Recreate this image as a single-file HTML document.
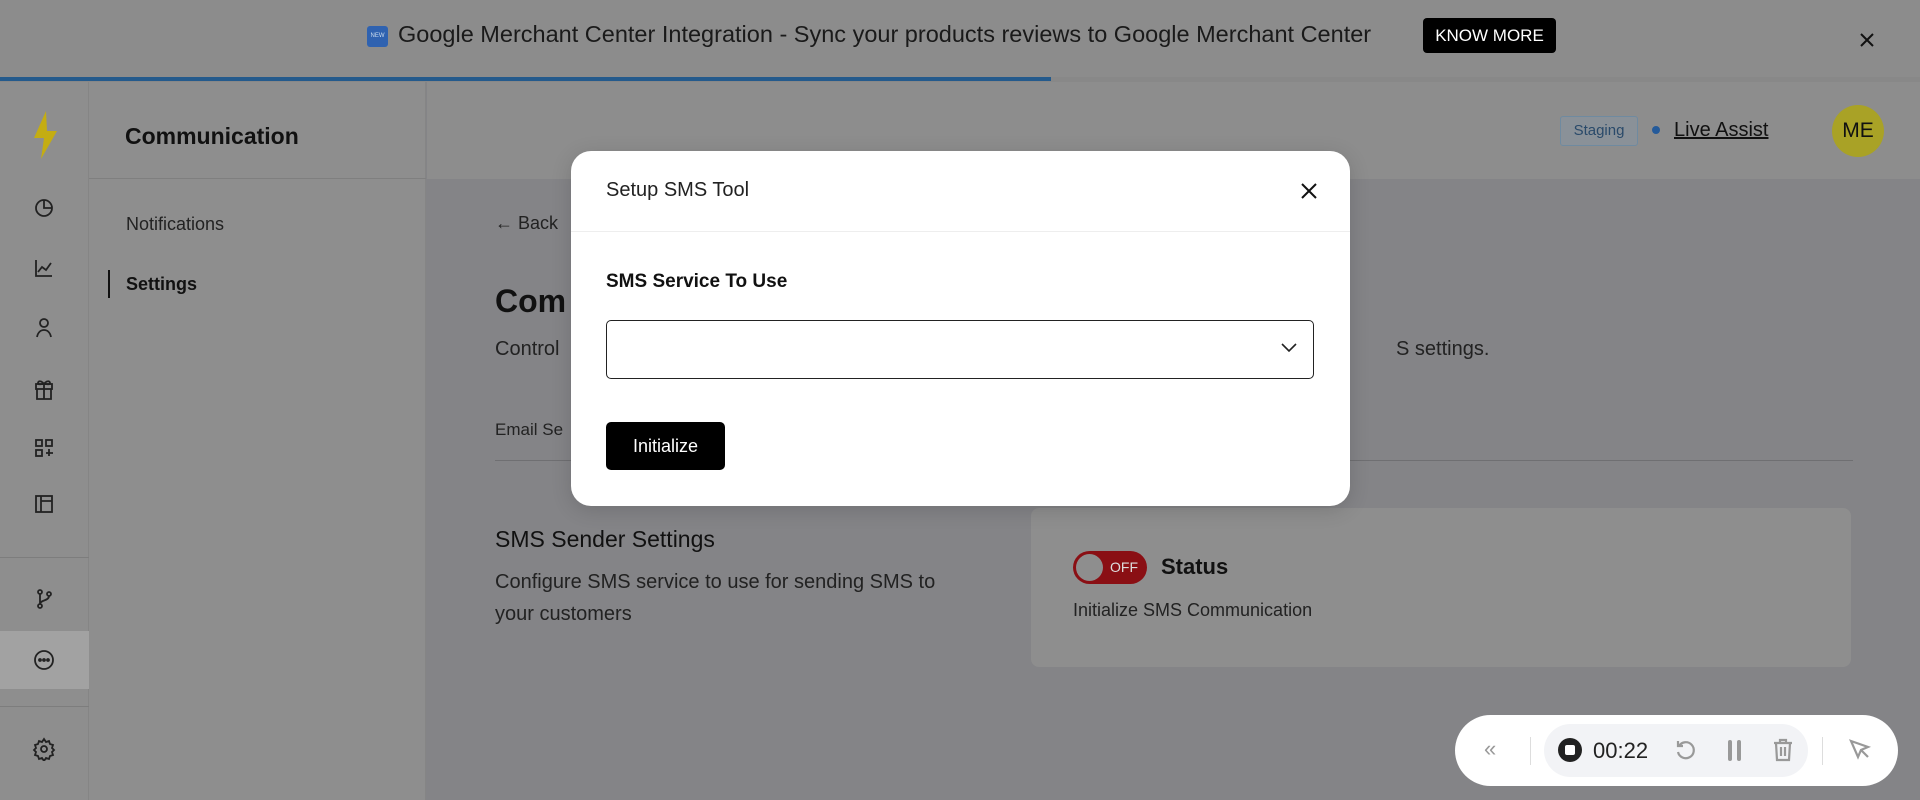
<!DOCTYPE html>
<html><head><meta charset="utf-8"><style>
*{margin:0;padding:0;box-sizing:border-box}
body{width:1920px;height:800px;overflow:hidden;position:relative;background:#848487;font-family:"Liberation Sans",sans-serif;color:#111}
.a{position:absolute}
.t{position:absolute;white-space:nowrap}
</style></head><body>
<div class="a" style="left:0;top:0;width:1920px;height:78px;background:#8c8c8c"></div>
<div class="a" style="left:0;top:77px;width:1920px;height:5px;background:#888"></div>
<div class="a" style="left:0;top:77px;width:1051px;height:4px;background:#245a8c"></div>
<div class="a" style="left:367px;top:26px;width:21px;height:21px;background:#2f62b0;border-radius:3px;font-size:6px;color:#cde;text-align:center;line-height:21px">NEW</div>
<div class="t" style="left:398px;top:21px;font-size:23.5px;color:#1a1a1a">Google Merchant Center Integration - Sync your products reviews to Google Merchant Center</div>
<div class="a" style="left:1423px;top:18px;width:133px;height:35px;background:#000;border-radius:4px;color:#fff;font-size:17px;text-align:center;line-height:35px">KNOW MORE</div>
<svg class="a" style="left:1860px;top:33px" width="14" height="14" stroke="#111" stroke-width="2"><path d="M1 1L13 13M13 1L1 13"/></svg>
<div class="a" style="left:0;top:82px;width:89px;height:718px;background:#8e8e8e;border-right:1px solid #858585"></div>
<svg class="a" style="left:30px;top:111px" width="30" height="48" viewBox="0 0 30 48"><path d="M16 0 L4 27 H14 L11 48 L27 20 H17 Z" fill="#c4ad12"/></svg>
<svg class="a" style="left:32px;top:196px" width="24" height="520" fill="none" stroke="#222" stroke-width="1.8">
<circle cx="12" cy="12" r="8"/><path d="M12 4v8h8"/>
<path d="M4 64v16h16M6 76l4-5 4 3 5-7"/>
<circle cx="12" cy="127" r="4"/><path d="M5 141c1-5 4-7 7-7s6 2 7 7"/>
<rect x="4" y="188" width="16" height="5"/><path d="M5 193v10h14v-10M12 188v15M12 188c-3-4-6-3-6-1s3 1 6 1c3 0 6 1 6-1s-3-3-6 1"/>
<rect x="4" y="244" width="6" height="6"/><rect x="14" y="244" width="6" height="6"/><rect x="4" y="254" width="6" height="6"/><path d="M17 253v7M14 257h7"/>
<rect x="4" y="300" width="16" height="16"/><path d="M9 300v16M9 305h11"/>
<circle cx="8" cy="396" r="2"/><circle cx="8" cy="410" r="2"/><circle cx="17" cy="398" r="2"/><path d="M8 398v10M17 400c0 5-9 4-9 8"/>
</svg>
<div class="a" style="left:0;top:557px;width:89px;height:1px;background:#7d7d7d"></div>
<div class="a" style="left:0;top:631px;width:89px;height:58px;background:#a2a2a2"></div>
<svg class="a" style="left:32px;top:648px" width="24" height="24" fill="none" stroke="#222" stroke-width="1.8"><circle cx="12" cy="12" r="9"/><circle cx="8" cy="12" r="1" fill="#222"/><circle cx="12" cy="12" r="1" fill="#222"/><circle cx="16" cy="12" r="1" fill="#222"/></svg>
<div class="a" style="left:0;top:706px;width:89px;height:1px;background:#7d7d7d"></div>
<svg class="a" style="left:32px;top:737px" width="24" height="24" fill="none" stroke="#222" stroke-width="1.8"><circle cx="12" cy="12" r="3"/><path d="M12 2l2 3 3-1 1 3 3 1-1 3 2 2-2 2 1 3-3 1-1 3-3-1-2 3-2-3-3 1-1-3-3-1 1-3-2-2 2-2-1-3 3-1 1-3 3 1z"/></svg>
<div class="a" style="left:89px;top:82px;width:337px;height:718px;background:#8e8e8e;border-right:1px solid #858585"></div>
<div class="a" style="left:89px;top:178px;width:337px;height:1px;background:#7f7f7f"></div>
<div class="t" style="left:125px;top:123px;font-size:23px;font-weight:bold">Communication</div>
<div class="t" style="left:126px;top:214px;font-size:18px;color:#222">Notifications</div>
<div class="a" style="left:108px;top:270px;width:2px;height:28px;background:#111"></div>
<div class="t" style="left:126px;top:274px;font-size:18px;font-weight:bold">Settings</div>
<div class="a" style="left:427px;top:82px;width:1493px;height:97px;background:#8d8d8d"></div>
<div class="a" style="left:1560px;top:116px;width:78px;height:30px;border:1px solid #6f8aa0;background:#8a9198;border-radius:3px;font-size:15px;color:#2a4a6a;text-align:center;line-height:28px">Staging</div>
<div class="a" style="left:1652px;top:126px;width:8px;height:8px;border-radius:50%;background:#245a9a"></div>
<div class="t" style="left:1674px;top:119px;font-size:20px;text-decoration:underline">Live Assist</div>
<div class="a" style="left:1832px;top:105px;width:52px;height:52px;border-radius:50%;background:#a9a226;font-size:21px;text-align:center;line-height:52px">ME</div>
<div class="t" style="left:495px;top:213px;font-size:18px;color:#222">← Back</div>
<div class="t" style="left:495px;top:283px;font-size:32px;font-weight:bold">Com</div>
<div class="t" style="left:495px;top:338px;font-size:20px;color:#222">Control</div>
<div class="t" style="left:1396px;top:338px;font-size:20px;color:#222">S settings.</div>
<div class="t" style="left:495px;top:420px;font-size:17px;color:#222">Email Se</div>
<div class="a" style="left:495px;top:460px;width:1358px;height:1px;background:#6f6f72"></div>
<div class="t" style="left:495px;top:526px;font-size:23px;color:#111">SMS Sender Settings</div>
<div class="t" style="left:495px;top:566px;font-size:20px;color:#222;line-height:32px">Configure SMS service to use for sending SMS to<br>your customers</div>
<div class="a" style="left:1031px;top:508px;width:820px;height:159px;background:#8e8e8e;border-radius:8px"></div>
<div class="a" style="left:1073px;top:551px;width:74px;height:33px;background:#8a0f14;border-radius:17px"></div>
<div class="a" style="left:1076px;top:554px;width:27px;height:27px;background:#8e8e8e;border-radius:50%"></div>
<div class="t" style="left:1110px;top:559px;font-size:14px;color:#ddd">OFF</div>
<div class="t" style="left:1161px;top:554px;font-size:22px;font-weight:bold">Status</div>
<div class="t" style="left:1073px;top:600px;font-size:18px;color:#222">Initialize SMS Communication</div>
<div class="a" style="left:571px;top:151px;width:779px;height:355px;background:#fff;border-radius:20px;box-shadow:0 4px 20px rgba(0,0,0,.15)"></div>
<div class="t" style="left:606px;top:179px;font-size:20px;color:#222">Setup SMS Tool</div>
<svg class="a" style="left:1300px;top:182px" width="18" height="18" stroke="#111" stroke-width="2"><path d="M2 2L16 16M16 2L2 16"/></svg>
<div class="a" style="left:571px;top:231px;width:779px;height:1px;background:#eee"></div>
<div class="t" style="left:606px;top:271px;font-size:19px;font-weight:bold">SMS Service To Use</div>
<div class="a" style="left:606px;top:320px;width:708px;height:59px;border:1.5px solid #222;border-radius:5px"></div>
<svg class="a" style="left:1281px;top:343px" width="16" height="10" fill="none" stroke="#222" stroke-width="1.6"><path d="M1 1l7 7 7-7"/></svg>
<div class="a" style="left:606px;top:422px;width:119px;height:48px;background:#000;border-radius:5px;color:#fff;font-size:18px;text-align:center;line-height:48px">Initialize</div>
<div class="a" style="left:1455px;top:715px;width:443px;height:71px;background:#fff;border-radius:36px"></div>
<div class="t" style="left:1484px;top:736px;font-size:22px;color:#999">«</div>
<div class="a" style="left:1530px;top:737px;width:1px;height:28px;background:#ddd"></div>
<div class="a" style="left:1544px;top:724px;width:264px;height:53px;background:#f2f3f6;border-radius:27px"></div>
<div class="a" style="left:1558px;top:738px;width:24px;height:24px;border-radius:50%;background:#222"></div>
<div class="a" style="left:1565px;top:745px;width:10px;height:10px;background:#fff;border-radius:2px"></div>
<div class="t" style="left:1593px;top:738px;font-size:22px;color:#222">00:22</div>
<svg class="a" style="left:1674px;top:738px" width="24" height="24" fill="none" stroke="#999" stroke-width="2.2"><path d="M5 8a8 8 0 1 1-1 6M4 3v5h5"/></svg>
<div class="a" style="left:1728px;top:740px;width:4px;height:21px;background:#999;border-radius:2px"></div>
<div class="a" style="left:1737px;top:740px;width:4px;height:21px;background:#999;border-radius:2px"></div>
<svg class="a" style="left:1772px;top:738px" width="22" height="24" fill="none" stroke="#999" stroke-width="2.2"><path d="M2 5h18M8 5V2h6v3M4 5l1 17h12l1-17M9 9v9M13 9v9"/></svg>
<div class="a" style="left:1822px;top:737px;width:1px;height:28px;background:#ddd"></div>
<svg class="a" style="left:1848px;top:738px" width="24" height="24" fill="none" stroke="#999" stroke-width="2.2"><path d="M3 3l17 6-7 3-3 7z M13 12l7 7"/></svg>
</body></html>
